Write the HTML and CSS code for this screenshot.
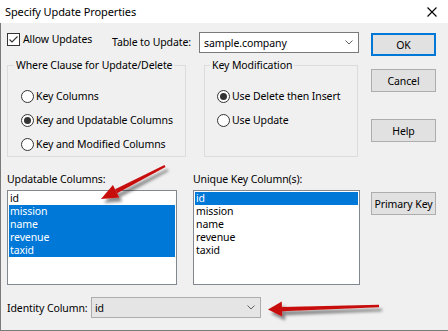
FILE: index.html
```html
<!DOCTYPE html>
<html lang="en">
<head>
    <meta charset="UTF-8">
    <title>Specify Update Properties</title>
    <link rel="stylesheet" href="styles.css">
</head>
<body>
    <div class="window">
        <header class="titlebar">
            <span class="title">Specify Update Properties</span>
            <svg class="close" width="10" height="10" viewBox="0 0 10 10">
                <path d="M0.5 0.5 L9.5 9.5 M9.5 0.5 L0.5 9.5" stroke="#000" stroke-width="1.1" fill="none"/>
            </svg>
        </header>

        <div class="client">
            <div class="main">
                <div class="top-row">
                    <label class="check">
                        <span class="box">
                            <svg width="11" height="11" viewBox="0 0 11 11">
                                <path d="M1.5 5.5 L4 8 L9.5 2.5" stroke="#333" stroke-width="1.1" fill="none"/>
                            </svg>
                        </span>
                        Allow Updates
                    </label>
                    <span class="table-label">Table to Update:</span>
                    <div class="combo">
                        <span>sample.company</span>
                        <svg class="chev" width="8" height="5" viewBox="0 0 8 5">
                            <path d="M0.5 0.5 L4 4 L7.5 0.5" stroke="#606060" stroke-width="1" fill="none"/>
                        </svg>
                    </div>
                </div>

                <div class="groups">
                    <fieldset class="group where">
                        <legend>Where Clause for Update/Delete</legend>
                        <div class="opts">
                            <div class="opt"><span class="radio"></span>Key Columns</div>
                            <div class="opt"><span class="radio on"></span>Key and Updatable Columns</div>
                            <div class="opt"><span class="radio"></span>Key and Modified Columns</div>
                        </div>
                    </fieldset>
                    <fieldset class="group keymod">
                        <legend>Key Modification</legend>
                        <div class="opts">
                            <div class="opt"><span class="radio on"></span>Use Delete then Insert</div>
                            <div class="opt"><span class="radio"></span>Use Update</div>
                        </div>
                    </fieldset>
                </div>

                <div class="lists">
                    <div class="list-col">
                        <div class="list-label">Updatable Columns:</div>
                        <div class="listbox">
                            <div class="item">id</div>
                            <div class="item sel">mission</div>
                            <div class="item sel">name</div>
                            <div class="item sel">revenue</div>
                            <div class="item sel">taxid</div>
                        </div>
                    </div>
                    <div class="list-col">
                        <div class="list-label">Unique Key Column(s):</div>
                        <div class="listbox">
                            <div class="item sel">id</div>
                            <div class="item">mission</div>
                            <div class="item">name</div>
                            <div class="item">revenue</div>
                            <div class="item">taxid</div>
                        </div>
                    </div>
                </div>

                <div class="identity">
                    <span class="identity-label">Identity Column:</span>
                    <div class="combo readonly">
                        <span>id</span>
                        <svg class="chev" width="8" height="5" viewBox="0 0 8 5">
                            <path d="M0.5 0.5 L4 4 L7.5 0.5" stroke="#606060" stroke-width="1" fill="none"/>
                        </svg>
                    </div>
                </div>
            </div>

            <div class="buttons">
                <div class="btn default">OK</div>
                <div class="btn cancel">Cancel</div>
                <div class="btn help">Help</div>
                <div class="btn pk">Primary Key</div>
            </div>
        </div>

        <!-- annotation arrows drawn over the dialog -->
        <svg class="arrows" width="448" height="331" viewBox="0 0 448 331">
            <defs>
                <filter id="shadow" x="-20%" y="-50%" width="140%" height="200%">
                    <feDropShadow dx="3" dy="4" stdDeviation="1.8" flood-color="#000" flood-opacity="0.45"/>
                </filter>
            </defs>
            <g fill="#c80c0c" filter="url(#shadow)">
                <polygon points="165.5,167.1 164.5,164.9 115.1,189.2 117.1,193.2"/>
                <polygon points="101,199 119.3,197.4 112.9,185"/>
                <polygon points="379,307.2 379,304.8 281.9,306.9 282.1,311.3"/>
                <polygon points="268,309.5 282.2,316.6 281.8,301.6"/>
            </g>
        </svg>
    </div>
</body>
</html>
```

FILE: styles.css
```css
* {
    box-sizing: border-box;
}

body {
    margin: 0;
    padding: 0;
    background-color: #FFFFFF;
}

.window {
    position: relative;
    width: 448px;
    height: 331px;
    font-family: 'Noto Sans', 'Open Sans', sans-serif;
    font-size: 10.5px;
    letter-spacing: -0.1px;
    color: #000000;
}

.titlebar {
    height: 23px;
    background-color: #FFFFFF;
    display: flex;
    align-items: center;
    justify-content: space-between;
    padding: 0 11px 0 5px;
}

.title {
    font-size: 11px;
}

.client {
    height: 308px;
    background-color: #F0F0F0;
    border-left: 1px solid #7A7A7A;
    border-bottom: 1px solid #7A7A7A;
    padding: 9px 0 0 6px;
    display: grid;
    grid-template-columns: 353px 65px;
    column-gap: 11px;
    align-items: start;
}

/* top row */
.top-row {
    display: flex;
    height: 21px;
}

.check {
    width: 105px;
    height: 13px;
    margin-top: 1px;
    display: flex;
    align-items: center;
    gap: 3px;
    line-height: 13px;
}

.box {
    width: 13px;
    height: 13px;
    border: 1px solid #333333;
    background-color: #FFFFFF;
    display: flex;
    align-items: center;
    justify-content: center;
}

.table-label {
    width: 87px;
    line-height: 21px;
}

.combo {
    width: 160px;
    height: 21px;
    border: 1px solid #7A7A7A;
    background-color: #FFFFFF;
    display: flex;
    align-items: center;
    justify-content: space-between;
    padding: 0 5px 0 4px;
}

.combo.readonly {
    width: 170px;
    background-color: #E5E5E5;
    border-color: #ADADAD;
    padding-left: 3px;
}

/* group boxes */
.groups {
    display: flex;
    gap: 18px;
    margin-top: 5px;
}

.group {
    margin: 0;
    padding: 0;
    min-width: 0;
    height: 99px;
    border: 1px solid #DCDCDC;
}

.group.where {
    width: 179px;
}

.group.keymod {
    width: 154px;
}

.group legend {
    padding: 0 2px;
    margin-left: 6px;
    line-height: 14px;
}

.group.keymod legend {
    margin-left: 5px;
}

.opts {
    padding: 12px 0 0 13px;
}

.keymod .opts {
    padding-left: 12px;
}

.opt {
    height: 24px;
    display: flex;
    align-items: center;
    gap: 2px;
}

.radio {
    width: 13px;
    height: 13px;
    border: 1px solid #333333;
    border-radius: 50%;
    background-color: #FFFFFF;
    display: flex;
    align-items: center;
    justify-content: center;
}

.radio.on::after {
    content: "";
    width: 7px;
    height: 7px;
    border-radius: 50%;
    background-color: #333333;
}

/* list boxes */
.lists {
    display: grid;
    grid-template-columns: 170px 167px;
    column-gap: 16px;
    margin-top: 15px;
}

.list-label {
    line-height: 14px;
}

.listbox {
    margin-top: 4px;
    height: 95px;
    border: 1px solid #828790;
    background-color: #FFFFFF;
    padding: 1px;
}

.item {
    height: 13px;
    line-height: 13px;
    padding-left: 1px;
}

.item.sel {
    background-color: #0078D7;
    color: #FFFFFF;
}

/* identity row */
.identity {
    display: flex;
    align-items: center;
    margin-top: 12px;
}

.identity-label {
    width: 84px;
}

/* buttons */
.buttons {
    display: flex;
    flex-direction: column;
}

.btn {
    height: 23px;
    border: 1px solid #ADADAD;
    background-color: #E1E1E1;
    display: flex;
    align-items: center;
    justify-content: center;
}

.btn.default {
    margin-top: 1px;
    border: 2px solid #0078D7;
}

.btn.cancel {
    margin-top: 13px;
}

.btn.help {
    margin-top: 27px;
}

.btn.pk {
    margin-top: 50px;
}

.arrows {
    position: absolute;
    left: 0;
    top: 0;
    pointer-events: none;
}
```
